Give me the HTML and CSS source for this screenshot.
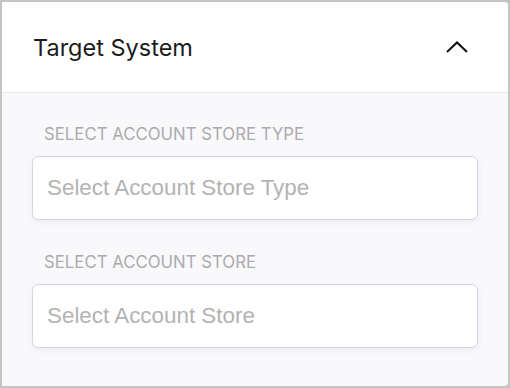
FILE: index.html
```html
<!DOCTYPE html>
<html lang="en">
<head>
    <meta charset="UTF-8">
    <meta name="viewport" content="width=device-width, initial-scale=1.0">
    <title>Target System</title>
    <link rel="stylesheet" href="styles.css">
</head>
<body>
    <div class="panel">
        <div class="panel-header">
            <h2>Target System</h2>
            <svg class="chevron" width="22" height="12" viewBox="0 0 22 12">
                <path d="M1 11 L11 1.5 L21 11" fill="none" stroke="#111" stroke-width="2"/>
            </svg>
        </div>

        <div class="panel-body">
            <div class="field">
                <label>Select Account Store Type</label>
                <input type="text" placeholder="Select Account Store Type">
            </div>
            <div class="field">
                <label>Select Account Store</label>
                <input type="text" placeholder="Select Account Store">
            </div>
        </div>
    </div>
</body>
</html>
```

FILE: styles.css
```css
body {
    margin: 0;
    background: #c4c4c4;
    padding: 2px;
    height: 388px;
    box-sizing: border-box;
    font-family: Inter, 'Noto Sans', sans-serif;
}

.panel {
    background: #f9f9fb;
    border-radius: 0 4px 4px 0;
    height: 100%;
    overflow: hidden;
}

.panel-header {
    background: white;
    height: 90px;
    border-bottom: 1px solid #e8e9ee;
    display: flex;
    align-items: center;
    justify-content: space-between;
    padding: 0 40px 0 31px;
}

.panel-header h2 {
    margin: 0;
    font-size: 23.5px;
    font-weight: 400;
    color: #1c1c1c;
}

.panel-body {
    padding: 31px 30px 0 30px;
}

.field {
    margin-bottom: 32px;
}

.field label {
    display: block;
    font-size: 16.8px;
    line-height: 20px;
    text-transform: uppercase;
    color: #ababaf;
    margin: 0 0 12px 12px;
}

.field input {
    display: block;
    width: 100%;
    box-sizing: border-box;
    height: 64px;
    border: 1px solid #d6d7de;
    border-radius: 6px;
    background: white;
    padding: 0 14px;
    font-family: 'Liberation Sans', Arial, sans-serif;
    font-size: 22.4px;
    box-shadow: 0 2px 6px rgba(60, 90, 160, 0.08);
    outline: none;
}

.field input::placeholder {
    color: #b3b3b3;
}
```
